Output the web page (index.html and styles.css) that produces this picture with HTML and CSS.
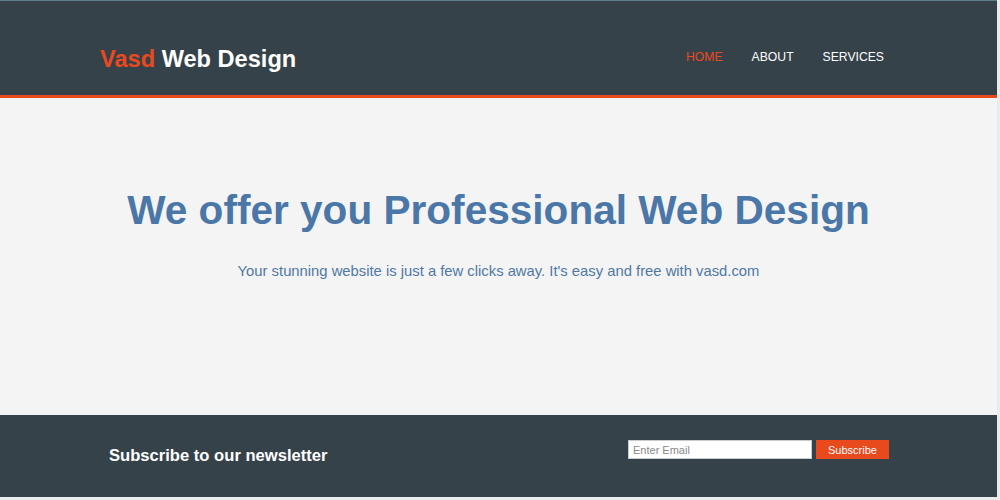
FILE: index.html
```html
<!DOCTYPE html>
<html lang="en">
<head>
<meta charset="utf-8">
<title>Vasd Web Design</title>
<link rel="stylesheet" href="styles.css">
</head>
<body>
<div class="page">
  <header class="header">
    <div class="container header-inner">
      <div class="logo"><span class="highlight">Vasd</span> Web Design</div>
      <nav class="nav">
        <a class="nav-link current" href="#">HOME</a>
        <a class="nav-link" href="#">ABOUT</a>
        <a class="nav-link" href="#">SERVICES</a>
      </nav>
    </div>
  </header>
  <section class="showcase">
    <h1 class="showcase-title">We offer you Professional Web Design</h1>
    <p class="showcase-text">Your stunning website is just a few clicks away. It's easy and free with vasd.com</p>
  </section>
  <section class="newsletter">
    <div class="container newsletter-inner">
      <h2 class="newsletter-title">Subscribe to our newsletter</h2>
      <form class="newsletter-form">
        <input class="email-input" type="email" placeholder="Enter Email">
        <button class="subscribe-btn" type="button">Subscribe</button>
      </form>
    </div>
  </section>
</div>
</body>
</html>
```
FILE: styles.css
```css
* { box-sizing: border-box; }
html, body {
  margin: 0;
  padding: 0;
  background: #e9ebec;
}
body {
  font-family: "Liberation Sans", Arial, sans-serif;
  font-size: 15px;
}
.page {
  width: 997px;
  height: 497px;
  background: #f4f4f4;
  display: flex;
  flex-direction: column;
}
.container {
  width: 789px;
  margin-left: 100px;
}
.header {
  background: #36424a;
  border-top: 1px solid #5d7e8c;
  border-bottom: 3px solid #e8491d;
  height: 98px;
}
.header-inner {
  display: flex;
  justify-content: space-between;
  align-items: center;
  height: 100%;
  padding-top: 21px;
}
.logo {
  color: #ffffff;
  font-weight: bold;
  font-size: 23.6px;
  margin-top: 1px;
}
.highlight { color: #e8491d; }
.nav {
  display: flex;
  gap: 29px;
  margin-top: -3px;
  margin-right: 5px;
}
.nav-link {
  color: #ffffff;
  text-decoration: none;
  font-size: 12.2px;
}
.nav-link.current { color: #e8491d; }
.showcase {
  flex: 1;
  text-align: center;
  color: #4a77a8;
  padding-top: 86px;
}
.showcase-title {
  margin: 0;
  font-size: 40.6px;
  font-weight: bold;
  line-height: 52px;
}
.showcase-text {
  margin: 27px 0 0;
  font-size: 14.8px;
  color: #4f79a4;
}
.newsletter {
  background: #36424a;
  height: 82px;
  color: #ffffff;
}
.newsletter-inner {
  display: flex;
  justify-content: space-between;
  align-items: flex-start;
  height: 100%;
  padding-left: 9px;
}
.newsletter-title {
  margin: 31px 0 0;
  font-size: 16.6px;
  font-weight: bold;
}
.newsletter-form {
  display: flex;
  gap: 4px;
  margin-top: 25px;
}
.email-input {
  width: 184px;
  height: 19px;
  border: 1px solid #c8ccce;
  padding: 0 4px;
  font-family: "Liberation Sans", Arial, sans-serif;
  font-size: 11px;
  background: #ffffff;
}
.email-input::placeholder { color: #8a8a8a; }
.subscribe-btn {
  width: 73px;
  height: 19px;
  background: #e8491d;
  color: #ffffff;
  border: 0;
  padding: 0;
  font-family: "Liberation Sans", Arial, sans-serif;
  font-size: 11px;
}
```
